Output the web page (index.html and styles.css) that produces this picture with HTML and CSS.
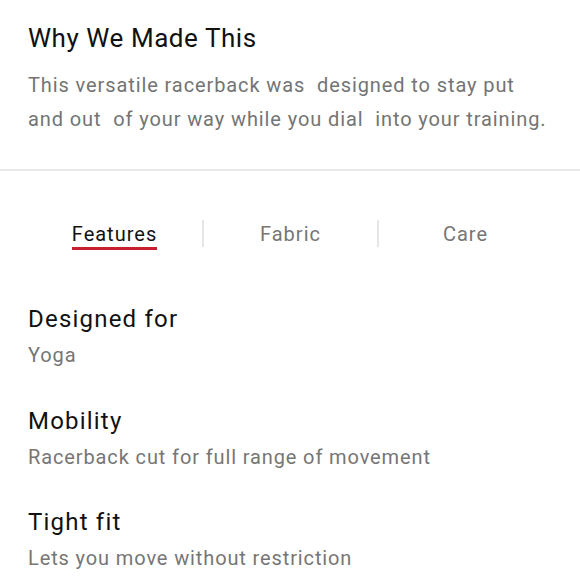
FILE: index.html
```html
<!DOCTYPE html>
<html lang="en">
<head>
<meta charset="utf-8">
<title>Why We Made This</title>
<link rel="stylesheet" href="styles.css">
</head>
<body>
<section class="intro">
  <h1 class="intro-title">Why We Made This</h1>
  <p class="intro-text">This versatile racerback was&nbsp; designed to stay put and out&nbsp; of your way while you dial&nbsp; into your training.</p>
</section>
<hr class="divider">
<nav class="tabs">
  <div class="tab"><span class="tab-label is-active">Features</span></div>
  <div class="tab tab-sep"><span class="tab-label">Fabric</span></div>
  <div class="tab tab-sep"><span class="tab-label">Care</span></div>
</nav>
<ul class="features">
  <li class="feature">
    <h2 class="feature-title">Designed for</h2>
    <p class="feature-text">Yoga</p>
  </li>
  <li class="feature">
    <h2 class="feature-title">Mobility</h2>
    <p class="feature-text">Racerback cut for full range of movement</p>
  </li>
  <li class="feature">
    <h2 class="feature-title">Tight fit</h2>
    <p class="feature-text">Lets you move without restriction</p>
  </li>
</ul>
</body>
</html>
```

FILE: styles.css
```css
html, body {
  margin: 0;
  padding: 0;
  background: #ffffff;
}

body {
  font-family: Roboto, "Liberation Sans", Arial, sans-serif;
  color: #161616;
  overflow: hidden;
}

.intro {
  padding: 22px 28px 0 28px;
}

.intro-title {
  margin: 0;
  font-size: 26px;
  font-weight: 400;
  line-height: 32px;
  letter-spacing: 0.55px;
  color: #111111;
}

.intro-text {
  margin: 14px 0 0 0;
  font-size: 20px;
  line-height: 34px;
  letter-spacing: 0.9px;
  color: #747474;
  width: 522px;
}

.divider {
  margin: 33px 0 0 0;
  border: 0;
  height: 2px;
  background: #e8e8e8;
}

.tabs {
  display: grid;
  grid-template-columns: repeat(3, 1fr);
  margin: 49px 28px 0 27px;
}

.tab {
  height: 27px;
  display: flex;
  justify-content: center;
  align-items: flex-start;
}

.tab-sep {
  border-left: 2px solid #e6e6e6;
}

.tab-label {
  display: inline-block;
  margin-top: 2px;
  font-size: 20px;
  line-height: 25px;
  letter-spacing: 1px;
  color: #767676;
  border-bottom: 3px solid transparent;
}

.tab-label.is-active {
  color: #111111;
  border-bottom-color: #c8202f;
}

.features {
  list-style: none;
  margin: 57px 0 0 0;
  padding: 0 28px;
  display: flex;
  flex-direction: column;
  gap: 35.5px;
}

.feature-title {
  margin: 0;
  font-size: 24px;
  font-weight: 400;
  line-height: 30px;
  letter-spacing: 1.2px;
  color: #111111;
}

.feature-text {
  margin: 6px 0 0 0;
  font-size: 20px;
  line-height: 30px;
  letter-spacing: 0.88px;
  color: #767676;
}
```
